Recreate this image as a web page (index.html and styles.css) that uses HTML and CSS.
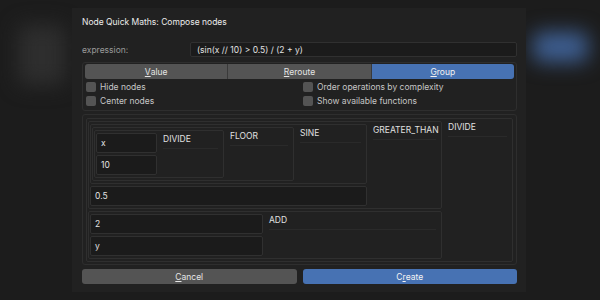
FILE: index.html
```html
<!DOCTYPE html>
<html>
<head>
<meta charset="utf-8">
<link rel="stylesheet" href="styles.css">
</head>
<body>
<div class="blob blob-left"></div>
<div class="blob blob-right"></div>
<div class="dialog">
  <div class="title">Node Quick Maths: Compose nodes</div>
  <div class="expr-row">
    <span class="expr-label">expression:</span>
    <div class="field expr-field">(sin(x // 10) &gt; 0.5) / (2 + y)</div>
  </div>
  <div class="box options">
    <div class="tabs">
      <div class="tab"><u>V</u>alue</div>
      <div class="tab"><u>R</u>eroute</div>
      <div class="tab active"><u>G</u>roup</div>
    </div>
    <div class="checks">
      <div class="check"><span class="cb"></span>Hide nodes</div>
      <div class="check"><span class="cb"></span>Order operations by complexity</div>
      <div class="check"><span class="cb"></span>Center nodes</div>
      <div class="check"><span class="cb"></span>Show available functions</div>
    </div>
  </div>
  <div class="box tree">
    <div class="node">
      <div class="inputs">
        <div class="node">
          <div class="inputs">
            <div class="node">
              <div class="inputs">
                <div class="node">
                  <div class="inputs">
                    <div class="node">
                      <div class="inputs divide-inputs">
                        <div class="field val">x</div>
                        <div class="field val">10</div>
                      </div>
                      <div class="op op-divide"><span class="op-label">DIVIDE</span></div>
                    </div>
                  </div>
                  <div class="op op-floor"><span class="op-label">FLOOR</span></div>
                </div>
              </div>
              <div class="op op-sine"><span class="op-label">SINE</span></div>
            </div>
            <div class="field val">0.5</div>
          </div>
          <div class="op op-gt"><span class="op-label">GREATER_THAN</span></div>
        </div>
        <div class="node">
          <div class="inputs add-inputs">
            <div class="field val">2</div>
            <div class="field val">y</div>
          </div>
          <div class="op op-add"><span class="op-label">ADD</span></div>
        </div>
      </div>
      <div class="op op-top"><span class="op-label">DIVIDE</span></div>
    </div>
  </div>
  <div class="buttons">
    <div class="btn"><u>C</u>ancel</div>
    <div class="btn primary">C<u>r</u>eate</div>
  </div>
</div>
</body>
</html>
```
FILE: styles.css
```css
html, body {
  margin: 0;
  padding: 0;
}
body {
  width: 600px;
  height: 300px;
  overflow: hidden;
  background: #1c1c1c;
  font-family: Inter, "DejaVu Sans", sans-serif;
  font-size: 8.5px;
  color: #dcdcdc;
  position: relative;
}
.blob {
  position: absolute;
  filter: blur(10px);
  border-radius: 8px;
}
.blob-left {
  left: 18px;
  top: 25px;
  width: 48px;
  height: 60px;
  background: #2e2e2e;
}
.blob-right {
  left: 533px;
  top: 32px;
  width: 55px;
  height: 30px;
  background: #3e5f92;
}
.dialog {
  position: relative;
  margin: 8px 0 0 72px;
  width: 454px;
  height: 284px;
  box-sizing: border-box;
  background: #212121;
  padding: 8px 9px 0 10px;
  display: flex;
  flex-direction: column;
}
.title {
  height: 12px;
  line-height: 12px;
  color: #ececec;
  margin-bottom: 14px;
}
.expr-row {
  display: flex;
  align-items: center;
  height: 15px;
  margin-bottom: 5px;
}
.expr-label {
  width: 108px;
  color: #9a9a9a;
}
.field {
  box-sizing: border-box;
  background: #1b1b1b;
  border: 1px solid #303030;
  border-radius: 2px;
  display: flex;
  align-items: center;
  padding-left: 6px;
  color: #e2e2e2;
}
.expr-field {
  flex: 1;
  height: 15px;
}
.box {
  box-sizing: border-box;
  border: 1px solid #2e2e2e;
  border-radius: 3px;
}
.options {
  height: 49px;
  padding: 1px 2px;
  margin-bottom: 3px;
}
.tabs {
  display: flex;
  height: 15px;
  border-radius: 3px;
  overflow: hidden;
}
.tab {
  flex: 1;
  display: flex;
  align-items: center;
  justify-content: center;
  background: #545454;
  color: #e4e4e4;
  border-right: 1px solid #3a3a3a;
}
.tab:last-child {
  border-right: none;
}
.tab.active {
  background: #4772b3;
  color: #f2f2f2;
}
.checks {
  display: grid;
  grid-template-columns: 217px 1fr;
  grid-auto-rows: 14px;
  padding-top: 1px;
}
.check {
  display: flex;
  align-items: center;
  color: #c6c6c6;
}
.cb {
  width: 10px;
  height: 10px;
  background: #545454;
  border-radius: 2px;
  margin: 0 4px 0 1px;
}
.tree {
  height: 151px;
  padding: 3px;
  margin-bottom: 4px;
}
.node {
  display: flex;
  border: 1px solid #2f2f2f;
  border-radius: 2px;
  padding: 2px 1px;
  gap: 2px;
}
.inputs {
  flex: 1;
  display: flex;
  flex-direction: column;
  gap: 2px;
}
.val {
  height: 20px;
  padding-left: 4px;
}
.op {
  border-radius: 2px;
  padding: 0 4px;
}
.op-label {
  display: block;
  height: 15px;
  line-height: 12px;
  border-bottom: 1px solid #2a2a2a;
  color: #e0e0e0;
}
.op-top { width: 59px; }
.op-gt { width: 63px; }
.op-sine { width: 61px; }
.op-floor { width: 58px; }
.op-divide { width: 55px; }
.op-add { flex: 1; }
.add-inputs { flex: none; width: 173px; }
.buttons {
  display: flex;
  gap: 6px;
  height: 15px;
}
.btn {
  flex: 1;
  display: flex;
  align-items: center;
  justify-content: center;
  background: #545454;
  border-radius: 3px;
  color: #e6e6e6;
}
.btn.primary {
  background: #4772b3;
  color: #f4f4f4;
}
```
